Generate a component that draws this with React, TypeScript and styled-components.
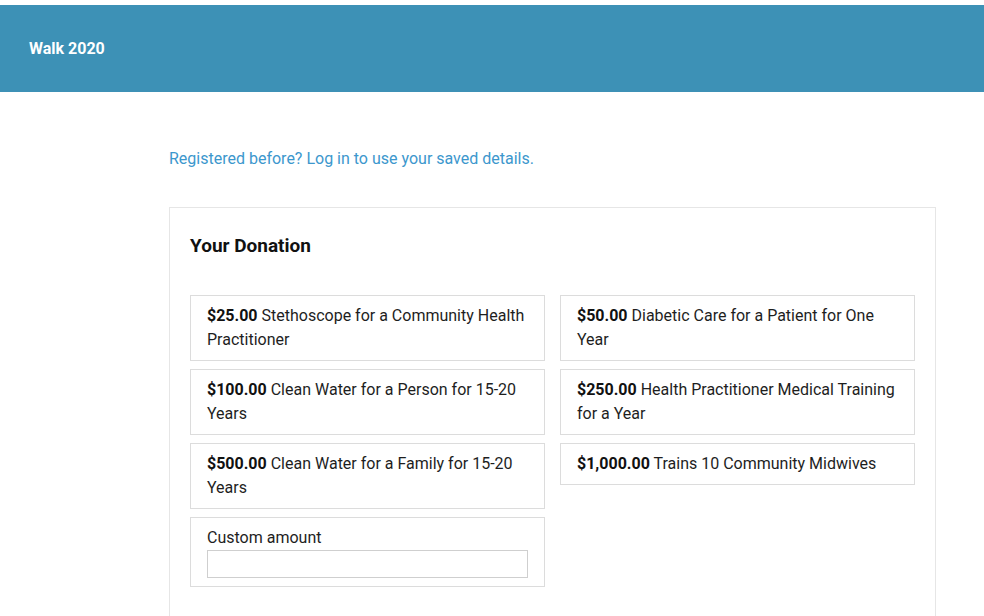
import styled, { createGlobalStyle } from "styled-components";

const GlobalStyle = createGlobalStyle`
  html, body {
    margin: 0;
    padding: 0;
    background: #fff;
    font-family: Roboto, "Liberation Sans", Arial, sans-serif;
    color: #1e1e1e;
  }
  * {
    box-sizing: border-box;
  }
`;

const Page = styled.div`
  padding-top: 5px;
  min-height: 616px;
  overflow: hidden;
`;

const Header = styled.header`
  height: 87px;
  background-color: #3d91b6;
  display: flex;
  align-items: center;
  padding-left: 29px;
`;

const Brand = styled.h1`
  margin: 0;
  color: #fff;
  font-size: 16px;
  font-weight: 700;
`;

const Main = styled.main`
  margin-left: 169px;
  width: 767px;
  padding-top: 55px;
`;

const LoginLink = styled.a`
  display: block;
  color: #3c97cd;
  font-size: 16px;
  line-height: 24px;
  text-decoration: none;
  cursor: pointer;
`;

const Card = styled.section`
  margin-top: 36px;
  border: 1px solid #e6e6e6;
  padding: 20px 20px 40px;
`;

const Title = styled.h2`
  margin: 8px 0 39px;
  font-size: 19px;
  line-height: 20px;
  font-weight: 700;
  color: #111;
`;

const Options = styled.div`
  display: grid;
  grid-template-columns: 1fr 1fr;
  column-gap: 15px;
  align-items: start;
`;

const Column = styled.div`
  display: flex;
  flex-direction: column;
  gap: 8px;
`;

const Option = styled.label`
  display: block;
  border: 1px solid #dcdcdc;
  padding: 8px 16px;
  font-size: 16px;
  line-height: 24px;
  color: #1e1e1e;
  cursor: pointer;
`;

const Amount = styled.strong`
  font-weight: 700;
  color: #111;
`;

const CustomLabel = styled.span`
  display: block;
`;

const CustomInput = styled.input`
  display: block;
  width: 100%;
  height: 28px;
  border: 1px solid #cfcfcf;
  border-radius: 0;
  padding: 0 6px;
  font: inherit;
  outline: none;
`;

type Gift = { amount: string; label: string };

const left: Gift[] = [
  { amount: "$25.00", label: "Stethoscope for a Community Health Practitioner" },
  { amount: "$100.00", label: "Clean Water for a Person for 15-20 Years" },
  { amount: "$500.00", label: "Clean Water for a Family for 15-20 Years" },
];

const right: Gift[] = [
  { amount: "$50.00", label: "Diabetic Care for a Patient for One Year" },
  { amount: "$250.00", label: "Health Practitioner Medical Training for a Year" },
  { amount: "$1,000.00", label: "Trains 10 Community Midwives" },
];

function GiftOption({ gift }: { gift: Gift }) {
  return (
    <Option>
      <Amount>{gift.amount}</Amount> {gift.label}
    </Option>
  );
}

export default function App() {
  return (
    <>
      <GlobalStyle />
      <Page>
        <Header>
          <Brand>Walk 2020</Brand>
        </Header>
        <Main>
          <LoginLink>Registered before? Log in to use your saved details.</LoginLink>
          <Card>
            <Title>Your Donation</Title>
            <Options>
              <Column>
                {left.map((g) => (
                  <GiftOption key={g.amount} gift={g} />
                ))}
                <Option>
                  <CustomLabel>Custom amount</CustomLabel>
                  <CustomInput type="text" />
                </Option>
              </Column>
              <Column>
                {right.map((g) => (
                  <GiftOption key={g.amount} gift={g} />
                ))}
              </Column>
            </Options>
          </Card>
        </Main>
      </Page>
    </>
  );
}
